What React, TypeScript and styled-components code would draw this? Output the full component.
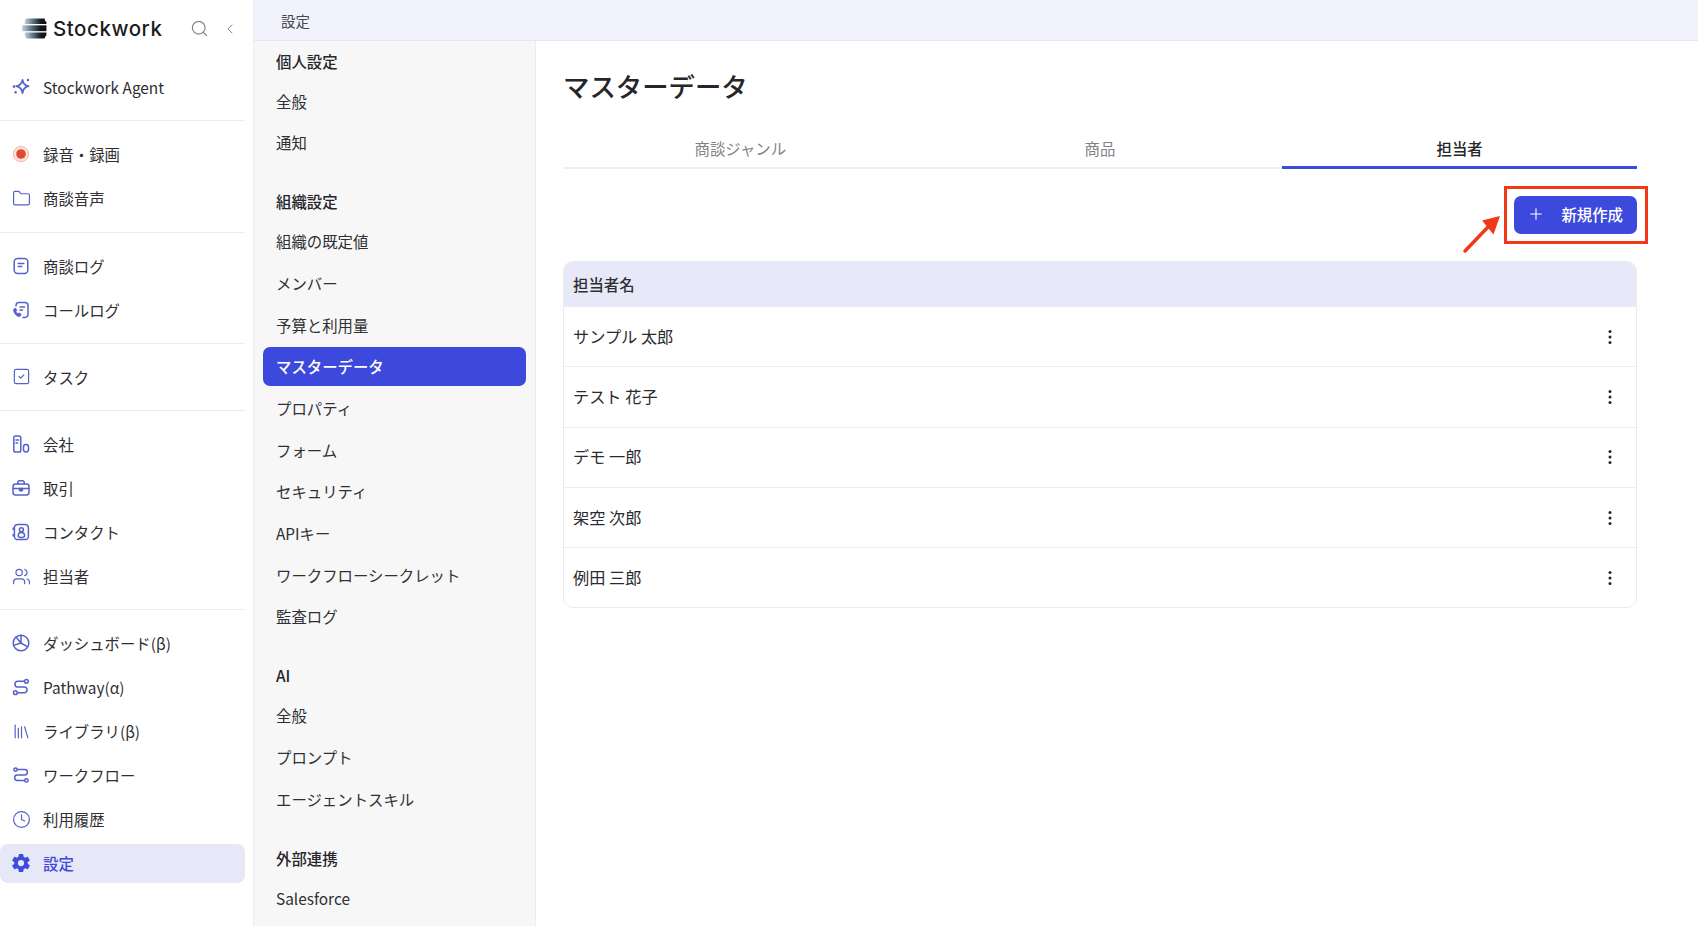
import React from "react";
import styled, { createGlobalStyle } from "styled-components";
import {
  ChevronLeft,
  Clock,
  Folder,
  Library,
  Plus,
  Search,
  SquareCheck,
  Users,
} from "lucide-react";
import { IoSettingsSharp } from "react-icons/io5";

const GlobalStyle = createGlobalStyle`
  html, body, #root {
    margin: 0;
    height: 100%;
  }
  body {
    overflow: hidden;
    background: #fff;
    color: #2b2b2f;
    font-family: "Noto Sans CJK JP", "Noto Sans", sans-serif;
    font-size: 15.4px;
  }
  * {
    box-sizing: border-box;
  }
`;

const Page = styled.div`
  display: flex;
  width: 1698px;
  height: 926px;
  overflow: hidden;
`;

const Sidebar = styled.aside`
  flex: 0 0 254px;
  padding-right: 8px;
  border-right: 1px solid #ececf0;
  background: #fff;
`;

const BrandRow = styled.div`
  display: flex;
  align-items: center;
  height: 54px;
  padding: 3px 0 0 21px;
`;

const BrandName = styled.span`
  margin-left: 6px;
  font-family: Inter, sans-serif;
  font-size: 20.5px;
  font-weight: 500;
  letter-spacing: 0.55px;
  color: #1c1d22;
`;

const BrandTools = styled.div`
  display: flex;
  align-items: center;
  gap: 13px;
  margin-left: 28px;
  color: #85868c;
`;

const NavGroup = styled.div<{ $last?: boolean }>`
  display: flex;
  flex-direction: column;
  gap: 5px;
  padding: 14px 0 13.3px;
  border-bottom: 1px solid ${(p) => (p.$last ? "transparent" : "#ebebee")};
`;

const NavItem = styled.div<{ $active?: boolean }>`
  display: flex;
  align-items: center;
  height: 39px;
  padding: 0 0 1px 11px;
  border-radius: 8px;
  background: ${(p) => (p.$active ? "#e6e7f7" : "transparent")};
  color: ${(p) => (p.$active ? "#3f4bdc" : "#2f2f33")};
  font-weight: ${(p) => (p.$active ? 500 : 400)};
`;

const NavIcon = styled.span<{ $active?: boolean }>`
  display: flex;
  align-items: center;
  justify-content: center;
  width: 20px;
  height: 20px;
  margin-right: 12px;
  color: ${(p) => (p.$active ? "#3f4bdc" : "#5561c9")};
`;

const Body = styled.div`
  flex: 1;
  display: flex;
  flex-direction: column;
  min-width: 0;
`;

const TopBar = styled.header`
  display: flex;
  align-items: center;
  flex: 0 0 41px;
  padding-left: 27px;
  background: #f1f2fb;
  border-bottom: 1px solid #e7e8ee;
  font-size: 14.5px;
  color: #47474c;
`;

const Columns = styled.div`
  flex: 1;
  display: flex;
  min-height: 0;
`;

const SettingsNav = styled.nav`
  flex: 0 0 282px;
  padding: 0 9px;
  background: #f7f7f8;
  border-right: 1px solid #ececee;
  overflow: hidden;
`;

const SectionTitle = styled.div<{ $first?: boolean }>`
  display: flex;
  align-items: center;
  height: 39px;
  margin-top: ${(p) => (p.$first ? "0" : "20px")};
  margin-bottom: 1px;
  padding-left: 13px;
  font-weight: 500;
  color: #26262a;
`;

const SettingsItem = styled.div<{ $active?: boolean }>`
  display: flex;
  align-items: center;
  height: 39px;
  margin-bottom: 2.7px;
  padding-left: 13px;
  border-radius: 7px;
  background: ${(p) => (p.$active ? "#3d49dc" : "transparent")};
  color: ${(p) => (p.$active ? "#fff" : "#303034")};
  font-weight: ${(p) => (p.$active ? 500 : 400)};
`;

const Content = styled.main`
  flex: 1;
  min-width: 0;
  padding: 27px 61px 0 27px;
  background: #fff;
`;

const Title = styled.h1`
  margin: 0;
  font-size: 26.4px;
  line-height: 36px;
  font-weight: 500;
  color: #26262a;
`;

const Tabs = styled.div`
  display: grid;
  grid-template-columns: repeat(3, 1fr);
  column-gap: 5px;
  margin-top: 24px;
  border-bottom: 2px solid #efeff1;
`;

const Tab = styled.div<{ $active?: boolean }>`
  display: flex;
  align-items: center;
  justify-content: center;
  height: 41px;
  margin-bottom: -2px;
  padding-top: 2px;
  border-bottom: 3px solid ${(p) => (p.$active ? "#3f4bdc" : "transparent")};
  color: ${(p) => (p.$active ? "#26262a" : "#838387")};
  font-weight: ${(p) => (p.$active ? 500 : 400)};
`;

const ActionRow = styled.div`
  display: flex;
  justify-content: flex-end;
  margin-top: 27px;
`;

const ButtonWrap = styled.div`
  position: relative;
`;

const PrimaryButton = styled.button`
  display: flex;
  align-items: center;
  justify-content: space-between;
  width: 123px;
  height: 38px;
  padding: 0 14px 2px 13px;
  border: none;
  border-radius: 7px;
  background: #3d49dc;
  color: #fff;
  font-family: inherit;
  font-size: 15.4px;
  font-weight: 500;
`;

const Highlight = styled.div`
  position: absolute;
  inset: -10px -11px -10px -10px;
  border: 3.5px solid #f03a17;
  pointer-events: none;
`;

const Arrow = styled.svg`
  position: absolute;
  left: -52px;
  top: 18px;
`;

const Table = styled.div`
  margin-top: 27px;
  border: 1px solid #ebebee;
  border-radius: 10px;
  overflow: hidden;
`;

const TableHeader = styled.div`
  display: flex;
  align-items: center;
  height: 44px;
  padding: 0 0 1px 9px;
  background: #e8e9f8;
  color: #2f2f33;
  font-weight: 500;
`;

const TableRow = styled.div`
  display: flex;
  align-items: center;
  justify-content: space-between;
  height: 60.3px;
  padding: 0 23px 0 9px;
  border-top: 1px solid #ececee;
  font-size: 16.2px;
  color: #2b2b2f;
`;

const RowLabel = styled.span`
  padding-bottom: 2px;
`;

const iconProps = {
  width: 20,
  height: 20,
  viewBox: "0 0 20 20",
  fill: "none",
  stroke: "currentColor",
  strokeWidth: 1.5,
  strokeLinecap: "round" as const,
  strokeLinejoin: "round" as const,
};

const BrandLogo = () => (
  <svg width="26" height="21" viewBox="0 0 24 18" preserveAspectRatio="none">
    <defs>
      <linearGradient id="slab" x1="0" x2="1" y1="0" y2="0">
        <stop offset="0" stopColor="#c3d2dc" />
        <stop offset="0.45" stopColor="#4a6272" />
        <stop offset="0.75" stopColor="#14171c" />
        <stop offset="1" stopColor="#0f1115" />
      </linearGradient>
    </defs>
    <path d="M5 0.5h17v1.7l1.5 1.3V5.2H3.5V2z" fill="url(#slab)" />
    <path d="M1 6.3h22.5v5H1z" fill="url(#slab)" />
    <path d="M3.5 12.4h20v2.2l-2 2.9H5l-1.5-2z" fill="url(#slab)" />
  </svg>
);

const AgentIcon = () => (
  <svg {...iconProps}>
    <path d="M11.5 2.8c.6 4 2.2 5.6 6 6.4-3.8.8-5.4 2.4-6 7-.7-4.6-2.3-6.2-6.2-7 3.9-.8 5.5-2.4 6.2-6.4z" strokeWidth="1.7" />
    <circle cx="17" cy="3" r="1.2" fill="currentColor" stroke="none" />
    <circle cx="3" cy="9.6" r="1.3" fill="currentColor" stroke="none" />
    <circle cx="4.6" cy="15.2" r="1.2" fill="currentColor" stroke="none" />
  </svg>
);

const RecordIcon = () => (
  <svg width="20" height="20" viewBox="0 0 20 20">
    <circle cx="10" cy="10" r="7.6" fill="#fbe3dc" stroke="#f4b5a4" strokeWidth="1" />
    <circle cx="10" cy="10" r="4.8" fill="#de4a2f" />
  </svg>
);

const NoteIcon = () => (
  <svg {...iconProps}>
    <rect x="3.2" y="2.6" width="13.6" height="14.8" rx="3.4" />
    <path d="M7.2 7.4h5.6M7.2 10.6h3.6" />
  </svg>
);

const CallIcon = () => (
  <svg {...iconProps}>
    <path d="M5 6V5.4A3 3 0 0 1 8 2.5h6a3 3 0 0 1 3 2.9v9a3 3 0 0 1-3 3h-2" />
    <path d="M9 7h4.6M9 10h2.6" />
    <path d="M3.2 8.8l1.7-.5 1 2.2-1 .9c.4 1 1.1 1.8 2.1 2.3l1-.9 2.1 1.2-.5 1.8c-.2.6-.8.9-1.4.8C5.4 16.2 3 13.7 2.5 10.2c-.1-.6.2-1.2.7-1.4z" fill="currentColor" strokeWidth="0.6" />
  </svg>
);

const CompanyIcon = () => (
  <svg {...iconProps}>
    <rect x="2.8" y="2" width="7" height="16" rx="1.8" />
    <rect x="12.5" y="10.5" width="5" height="7.5" rx="2.4" />
    <path d="M5 6h2.6M5 9h1.6" />
  </svg>
);

const DealIcon = () => (
  <svg {...iconProps}>
    <rect x="2" y="6" width="16" height="11" rx="2.4" />
    <path d="M6.8 6V4.6A1.8 1.8 0 0 1 8.6 2.8h2.8a1.8 1.8 0 0 1 1.8 1.8V6" />
    <path d="M2 10.5h16" />
    <path d="M8.5 10.5h3v1.8l-1.5.7-1.5-.7z" fill="currentColor" />
  </svg>
);

const ContactIcon = () => (
  <svg {...iconProps}>
    <rect x="3.4" y="2.4" width="14" height="15.2" rx="3.4" />
    <circle cx="10.4" cy="7.8" r="2" />
    <path d="M7.2 14c0-4.6 6.4-4.6 6.4 0a3.2 1.4 0 0 1-6.4 0z" />
    <path d="M2.2 6v1.6M2.2 12.4V14" />
  </svg>
);

const PieIcon = () => (
  <svg {...iconProps}>
    <circle cx="10" cy="10" r="7.8" />
    <path d="M10 2.2V10l6.7 3.8M10 10l-7.4 2.4M10 10L5 4" />
  </svg>
);

const PathwayIcon = () => (
  <svg {...iconProps}>
    <circle cx="15.4" cy="4.3" r="1.9" />
    <circle cx="4.4" cy="15.7" r="1.9" />
    <path d="M13.4 4.3H6.3a2.9 2.9 0 0 0 0 5.7h7.4a2.9 2.9 0 0 1 0 5.7H6.4" />
  </svg>
);

const FlowIcon = () => (
  <svg {...iconProps}>
    <circle cx="4.6" cy="4.6" r="1.7" />
    <circle cx="15.4" cy="15.4" r="1.7" />
    <path d="M6.4 4.6h7.3a2.7 2.7 0 0 1 0 5.4H6.3a2.7 2.7 0 0 0 0 5.4h7.3" />
  </svg>
);

const MoreDots = () => (
  <svg width="6" height="16" viewBox="0 0 6 16" fill="#26262a">
    <circle cx="3" cy="2.5" r="1.5" />
    <circle cx="3" cy="8" r="1.5" />
    <circle cx="3" cy="13.5" r="1.5" />
  </svg>
);

const stroke = { size: 19, strokeWidth: 1.5 };

type NavEntry = { label: string; icon: React.ReactNode; active?: boolean };

const navGroups: NavEntry[][] = [
  [{ label: "Stockwork Agent", icon: <AgentIcon /> }],
  [
    { label: "録音・録画", icon: <RecordIcon /> },
    { label: "商談音声", icon: <Folder {...stroke} /> },
  ],
  [
    { label: "商談ログ", icon: <NoteIcon /> },
    { label: "コールログ", icon: <CallIcon /> },
  ],
  [{ label: "タスク", icon: <SquareCheck {...stroke} /> }],
  [
    { label: "会社", icon: <CompanyIcon /> },
    { label: "取引", icon: <DealIcon /> },
    { label: "コンタクト", icon: <ContactIcon /> },
    { label: "担当者", icon: <Users {...stroke} /> },
  ],
  [
    { label: "ダッシュボード(β)", icon: <PieIcon /> },
    { label: "Pathway(α)", icon: <PathwayIcon /> },
    { label: "ライブラリ(β)", icon: <Library {...stroke} /> },
    { label: "ワークフロー", icon: <FlowIcon /> },
    { label: "利用履歴", icon: <Clock {...stroke} /> },
    { label: "設定", icon: <IoSettingsSharp size={20} />, active: true },
  ],
];

const settingsSections = [
  { title: "個人設定", items: ["全般", "通知"] },
  {
    title: "組織設定",
    items: [
      "組織の既定値",
      "メンバー",
      "予算と利用量",
      "マスターデータ",
      "プロパティ",
      "フォーム",
      "セキュリティ",
      "APIキー",
      "ワークフローシークレット",
      "監査ログ",
    ],
  },
  { title: "AI", items: ["全般", "プロンプト", "エージェントスキル"] },
  { title: "外部連携", items: ["Salesforce"] },
];

const people = ["サンプル 太郎", "テスト 花子", "デモ 一郎", "架空 次郎", "例田 三郎"];

export default function App() {
  return (
    <>
      <GlobalStyle />
      <Page>
        <Sidebar>
          <BrandRow>
            <BrandLogo />
            <BrandName>Stockwork</BrandName>
            <BrandTools>
              <Search size={19} strokeWidth={1.5} />
              <ChevronLeft size={16} strokeWidth={1.5} />
            </BrandTools>
          </BrandRow>
          {navGroups.map((group, i) => (
            <NavGroup key={i} $last={i === navGroups.length - 1}>
              {group.map((item) => (
                <NavItem key={item.label} $active={item.active}>
                  <NavIcon $active={item.active}>{item.icon}</NavIcon>
                  {item.label}
                </NavItem>
              ))}
            </NavGroup>
          ))}
        </Sidebar>
        <Body>
          <TopBar>設定</TopBar>
          <Columns>
            <SettingsNav>
              {settingsSections.map((section, i) => (
                <div key={section.title}>
                  <SectionTitle $first={i === 0}>{section.title}</SectionTitle>
                  {section.items.map((item) => (
                    <SettingsItem key={item} $active={item === "マスターデータ"}>
                      {item}
                    </SettingsItem>
                  ))}
                </div>
              ))}
            </SettingsNav>
            <Content>
              <Title>マスターデータ</Title>
              <Tabs>
                <Tab>商談ジャンル</Tab>
                <Tab>商品</Tab>
                <Tab $active>担当者</Tab>
              </Tabs>
              <ActionRow>
                <ButtonWrap>
                  <PrimaryButton>
                    <Plus size={18} strokeWidth={1.5} />
                    新規作成
                  </PrimaryButton>
                  <Highlight />
                  <Arrow width="40" height="40" viewBox="0 0 40 40">
                    <path d="M3 37L27 12" stroke="#f03a17" strokeWidth="3.5" strokeLinecap="round" />
                    <path d="M38 2L20 6.5 31.5 20.5z" fill="#f03a17" />
                  </Arrow>
                </ButtonWrap>
              </ActionRow>
              <Table>
                <TableHeader>担当者名</TableHeader>
                {people.map((name) => (
                  <TableRow key={name}>
                    <RowLabel>{name}</RowLabel>
                    <MoreDots />
                  </TableRow>
                ))}
              </Table>
            </Content>
          </Columns>
        </Body>
      </Page>
    </>
  );
}
